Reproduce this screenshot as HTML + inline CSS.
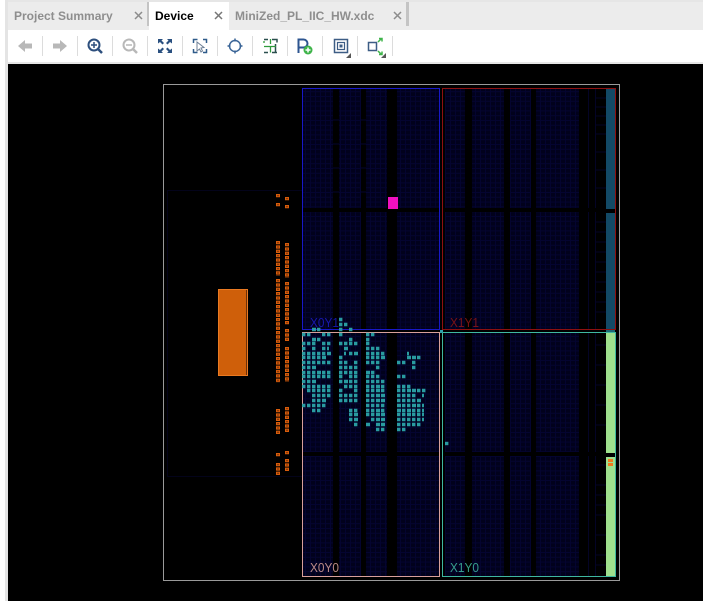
<!DOCTYPE html>
<html><head><meta charset="utf-8"><style>
html,body{margin:0;padding:0;background:#fff;width:703px;height:601px;overflow:hidden}
body{position:relative;font-family:"Liberation Sans",sans-serif}
.a{position:absolute}
.t{position:absolute;top:9px;font-size:12px;font-weight:bold;line-height:14px;white-space:nowrap}
</style></head><body>
<div class="a" style="left:0;top:0;width:5px;height:601px;background:#fff"></div>
<div class="a" style="left:5px;top:0;width:3px;height:601px;background:#e4e4e4"></div>
<div class="a" style="left:8px;top:0;width:695px;height:30px;background:#ececec"></div>
<div class="a" style="left:8px;top:0;width:695px;height:2px;background:#e6e6e6"></div>
<div class="a" style="left:147px;top:2px;width:2px;height:24px;background:#c4c4c4"></div>
<div class="a" style="left:149px;top:2px;width:80px;height:28px;background:#fff"></div>
<div class="a" style="left:406px;top:2px;width:3px;height:24px;background:#c4c4c4"></div>
<div class="t" style="left:14px;color:#8e8e8e">Project Summary</div>
<div class="t" style="left:155px;color:#000">Device</div>
<div class="t" style="left:235px;color:#8e8e8e">MiniZed_PL_IIC_HW.xdc</div>
<div class="a" style="left:8px;top:62px;width:695px;height:2px;background:#e6e6e6"></div>
<div class="a" style="left:8px;top:64px;width:695px;height:537px;background:#000"></div>

<svg class="a" style="left:0;top:0" width="703" height="64" viewBox="0 0 703 64" fill="none">
<g stroke="#8c8c8c" stroke-width="1.5"><path d="M135 12l7 7M142 12l-7 7M394 12l7 7M401 12l-7 7" /><path d="M215 12l7 7M222 12l-7 7" stroke="#777"/></g>
<path d="M42.5 36v20M77.5 36v20M112.5 36v20M147.5 36v20M182.5 36v20M217.5 36v20M252.5 36v20M287.5 36v20M322.5 36v20M357.5 36v20M392.5 36v20" stroke="#dcdcdc"/>
<path d="M18 46l7-6v3.500h7v5h-7v3.500z" fill="#b8b8b8"/>
<path d="M67 46l-7-6v3.500h-7v5h7v3.500z" fill="#b8b8b8"/>
<circle cx="94" cy="45" r="5.500" stroke="#2d4f7d" stroke-width="2"/><path d="M98 49l4 4" stroke="#2d4f7d" stroke-width="2.500"/><path d="M91 45h6M94 42v6" stroke="#2d4f7d" stroke-width="1.500"/>
<circle cx="129" cy="45" r="5.500" stroke="#b8b8b8" stroke-width="2"/><path d="M133 49l4 4" stroke="#b8b8b8" stroke-width="2.500"/><path d="M126 45h6" stroke="#b8b8b8" stroke-width="1.500"/>
<path d="M158 39h5l-1.500 1.500 2.500 2.500-1.500 1.500-2.500-2.500-2 1.500zM172 39h-5l1.500 1.500-2.500 2.500 1.500 1.500 2.500-2.500 2 1.500zM158 53h5l-1.500-1.500 2.500-2.500-1.500-1.500-2.500 2.500-2-1.500zM172 53h-5l1.500-1.500-2.500-2.500 1.500-1.500 2.500 2.500 2-1.500z" fill="#2a5080"/>
<path d="M193.500 43v-3.500h4M203 39.500h3.500v3.500M193.500 49v3.500h4M206.500 49v3.500h-3.500" stroke="#2f5b8a" stroke-width="1.500"/>
<path d="M197 42l7 5.500-3 .5 1.500 3-1.500 1-1.500-3-2.500 2z" fill="#fff" stroke="#6d7f96"/>
<circle cx="235" cy="46" r="5.500" stroke="#3a6597" stroke-width="1.500"/><path d="M235 38.500v3M235 50.500v3M227.500 46h3M239.500 46h3" stroke="#3a6597" stroke-width="1.500"/>
<path d="M264 39.500h4M264 52.500h4M272 39.500h5v3M272 52.500h5M275.500 44v9" stroke="#2a4f4f" stroke-width="1.500"/>
<path d="M264 46.500h6.500v6M270.500 39v5M264 46.500h12M264 41v2" stroke="#2f9a3c" stroke-width="1.300"/>
<path d="M298.500 53V39.500h5a4 4 0 0 1 0 8h-5" stroke="#2d5590" stroke-width="2"/>
<circle cx="308" cy="50" r="4.500" fill="#3fb44a"/><path d="M305.500 50h5M308 47.500v5" stroke="#fff" stroke-width="1.500"/>
<rect x="334.500" y="39.500" width="13" height="13" stroke="#3d5d85" stroke-width="1.500"/><rect x="337.500" y="42.500" width="7" height="7" stroke="#3d5d85" stroke-width="1.200"/><rect x="339.500" y="44.500" width="3" height="3" fill="#3d5d85"/>
<path d="M351 58h-5l5-5z" fill="#555"/>
<rect x="368.500" y="42.500" width="8" height="8" stroke="#3d5d85" stroke-width="1.500"/>
<path d="M378 42l3-3M379 38.500h3v3M378 51l3 3M379 54.500h3v-3" stroke="#3fb44a" stroke-width="1.500"/>
<path d="M386 58h-5l5-5z" fill="#555"/>
</svg>

<svg class="a" style="left:0;top:64px" width="703" height="537" viewBox="0 64 703 537" fill="none" shape-rendering="crispEdges">
<defs>
<pattern id="g" width="5" height="4.800" patternUnits="userSpaceOnUse"><rect width="5" height="4.800" fill="#01011c"/><path d="M0 .5h5M.5 0v4.800" stroke="#040430"/></pattern>
</defs>
<rect x="163.500" y="84.500" width="456" height="496" stroke="#9a9a9a"/>
<path d="M167.500 190v286M167 190.500h135M167 476.500h135" stroke="#03031a"/>
<!-- X0 columns -->
<g fill="url(#g)">
<rect x="303" y="89" width="30" height="119"/><rect x="339" y="89" width="22" height="119"/><rect x="366" y="89" width="21" height="119"/><rect x="397" y="89" width="42" height="119"/>
<rect x="303" y="212" width="30" height="118"/><rect x="339" y="212" width="22" height="118"/><rect x="366" y="212" width="21" height="118"/><rect x="397" y="212" width="42" height="118"/>
<rect x="303" y="333" width="30" height="119"/><rect x="339" y="333" width="22" height="119"/><rect x="366" y="333" width="21" height="119"/><rect x="397" y="333" width="42" height="119"/>
<rect x="303" y="456" width="30" height="120"/><rect x="339" y="456" width="22" height="120"/><rect x="366" y="456" width="21" height="120"/><rect x="397" y="456" width="42" height="120"/>
<!-- X1 columns -->
<rect x="445" y="89" width="20" height="119"/><rect x="472" y="89" width="32" height="119"/><rect x="510" y="89" width="21" height="119"/><rect x="536" y="89" width="43" height="119"/>
<rect x="445" y="212" width="20" height="118"/><rect x="472" y="212" width="32" height="118"/><rect x="510" y="212" width="21" height="118"/><rect x="536" y="212" width="43" height="118"/>
<rect x="445" y="333" width="20" height="119"/><rect x="472" y="333" width="32" height="119"/><rect x="510" y="333" width="21" height="119"/><rect x="536" y="333" width="43" height="119"/>
<rect x="445" y="456" width="20" height="120"/><rect x="472" y="456" width="32" height="120"/><rect x="510" y="456" width="21" height="120"/><rect x="536" y="456" width="43" height="120"/>
</g>
<path d="M588.500 89v119M595.500 89v119M588.500 212v118M595.500 212v118M588.500 333v119M595.500 333v119M588.500 456v120M595.500 456v120M595 98h11M595 107h11M595 116h11M595 125h11M595 134h11M595 152h11M595 170h11M595 188h11M595 222h11M595 232h11M595 242h11M595 252h11M595 262h11M595 272h11M595 282h11M595 292h11M595 302h11M595 312h11M595 345h11M595 365h11M595 385h11M595 405h11M595 425h11M595 465h11M595 485h11M595 495h11M595 505h11M595 515h11M595 535h11M595 555h11M595 565h11" stroke="#040426"/>
<path d="M333 120h6M333 144h6M333 168h6M333 192h6M361 120h5M361 144h5M361 168h5M361 192h5" stroke="#040430"/>
<rect x="606" y="89" width="9" height="241" fill="#134a66"/>
<rect x="606" y="330" width="9" height="3" fill="#1c6a78"/>
<rect x="606" y="333" width="9" height="243" fill="#9fe08d"/>
<rect x="606" y="209" width="10" height="4" fill="#000"/>
<rect x="606" y="453" width="10" height="4" fill="#000"/>
<rect x="608" y="459" width="5" height="3" fill="#f07a1e"/><rect x="608" y="463" width="5" height="3" fill="#f07a1e"/>
<!-- region borders -->
<rect x="302.500" y="88.500" width="137" height="241" stroke="#1818c8"/>
<rect x="442.500" y="88.500" width="173" height="241" stroke="#8e1010"/>
<rect x="302.500" y="332.500" width="137" height="244" stroke="#d9a09a"/>
<rect x="442.500" y="332.500" width="173" height="244" stroke="#3fb8a0"/>
<rect x="440" y="330" width="3" height="3" fill="#2fa0a8"/>
<!-- IO block -->
<rect x="218.500" y="289.500" width="29" height="86" fill="#cf5f0a" stroke="#ea7a22"/>
<rect x="246" y="290" width="1" height="85" fill="#6a3008"/>
<!-- IO pads -->
<g shape-rendering="auto" stroke-width="4">
<path stroke="#d85c0c" stroke-dasharray="3.300 1.030" d="M278 194v4M278 203v4M278 241v35M278 279v104M278 409v26M278 453v4M278 463v12"/>
<path stroke="#d85c0c" stroke-dasharray="3.300 1.030" d="M287 197v4M287 205v4M287 243v35M287 282v43M287 329v13M287 347v35M287 407v26M287 451v4M287 459v13"/>
<path stroke="#5a2604" stroke-width="1.200" stroke-dasharray="1.300 3.030" stroke-dashoffset="-1" d="M278 194v4M278 203v4M278 241v35M278 279v104M278 409v26M278 453v4M278 463v12"/>
<path stroke="#5a2604" stroke-width="1.200" stroke-dasharray="1.300 3.030" stroke-dashoffset="-1" d="M287 197v4M287 205v4M287 243v35M287 282v43M287 329v13M287 347v35M287 407v26M287 451v4M287 459v13"/>
</g>
<!-- magenta -->
<rect x="388" y="197" width="10" height="12" fill="#f010c0"/>
<!-- placed cells -->
<g stroke="#2ba3a8" stroke-width="3.4" shape-rendering="auto" stroke-opacity=".95">
<path d="M302 334.500h3.400M302 343.500h3.400M302 348.500h3.400M302 353.500h3.400M302 357.500h3.400M302 362.500h3.400M302 367.500h3.400M302 372.500h3.400M302 376.500h3.400M302 381.500h3.400M302 386.500h3.400M302 405.500h3.400"/>
<path d="M307 334.500h3.400M307 343.500h3.400M307 353.500h3.400M307 357.500h3.400M307 362.500h3.400M307 367.500h3.400M307 372.500h3.400M307 376.500h3.400M307 381.500h3.400M307 386.500h3.400M307 390.500h3.400M307 405.500h3.400"/>
<path d="M312 329.500h4M312 339.500h4M312 343.500h3.400M312 348.500h3.400M312 353.500h3.400M312 357.500h3.400M312 362.500h3.400M312 367.500h4M312 372.500h3.400M312 376.500h3.400M312 381.500h4M312 386.500h3.400M312 390.500h3.400M312 395.500h3.400M312 400.500h3.400M312 405.500h3.400M312 410.500h3.400"/>
<path d="M317 329.500h3.400M317 339.500h3.400M317 353.500h3.400M317 357.500h3.400M317 362.500h3.400M317 372.500h4M317 376.500h3.400M317 386.500h3.400M317 390.500h3.400M317 395.500h3.400M317 400.500h3.400M317 405.500h3.400M317 410.500h3.400"/>
<path d="M322 334.500h3.400M322 343.500h3.400M322 348.500h3.400M322 353.500h3.400M322 357.500h4M322 362.500h3.400M322 372.500h3.400M322 376.500h3.400M322 386.500h3.400M322 390.500h3.400M322 395.500h3.400M322 400.500h4M322 405.500h3.400"/>
<path d="M327 334.500h3.400M327 343.500h3.400M327 348.500h2M327 353.500h4M327 362.500h3.400M327 372.500h3.400M327 376.500h3.400M327 386.500h3.400M327 390.500h3.400M327 395.500h3.400"/>
<path d="M339 319.500h3.400M339 324.500h3.400M339 329.500h3.400M339 334.500h3.400M339 343.500h3.400M339 357.500h3.400M339 362.500h3.400M339 367.500h3.400M339 372.500h3.400M339 376.500h3.400M339 381.500h3.400M339 390.500h3.400M339 395.500h3.400M339 400.500h3.400"/>
<path d="M344 324.500h3.400M344 343.500h3.400M344 348.500h4M344 353.500h2M344 362.500h3.400M344 367.500h3.400M344 372.500h3.400M344 381.500h4M344 386.500h3.400M344 395.500h3.400M344 400.500h3.400"/>
<path d="M349 329.500h3.400M349 339.500h3.400M349 343.500h3.400M349 353.500h3.400M349 367.500h3.400M349 372.500h3.400M349 376.500h3.400M349 381.500h3.400M349 386.500h3.400M349 395.500h3.400M349 400.500h3.400M349 410.500h3.400M349 414.500h3.400M349 419.500h3.400"/>
<path d="M354 343.500h3.400M354 353.500h4M354 362.500h3.400M354 367.500h3.400M354 372.500h3.400M354 376.500h3.400M354 381.500h3.400M354 386.500h3.400M354 390.500h3.400M354 395.500h3.400M354 400.500h3.400M354 410.500h3.400M354 414.500h4M354 419.500h4M354 424.500h3.400"/>
<path d="M366 334.500h3.400M366 339.500h3.400M366 343.500h3.400M366 348.500h3.400M366 353.500h3.400M366 357.500h3.400M366 362.500h3.400M366 372.500h4M366 376.500h3.400M366 381.500h3.400M366 386.500h3.400M366 390.500h3.400M366 395.500h3.400M366 400.500h3.400M366 405.500h3.400M366 410.500h3.400M366 414.500h3.400M366 424.500h4"/>
<path d="M371 334.500h3.400M371 348.500h3.400M371 353.500h3.400M371 357.500h3.400M371 362.500h3.400M371 372.500h3.400M371 376.500h3.400M371 381.500h3.400M371 386.500h3.400M371 390.500h3.400M371 395.500h3.400M371 400.500h3.400M371 405.500h3.400M371 410.500h3.400M371 414.500h3.400M371 419.500h3.400"/>
<path d="M376 348.500h3.400M376 353.500h3.400M376 357.500h3.400M376 362.500h3.400M376 367.500h3.400M376 376.500h3.400M376 381.500h3.400M376 386.500h4M376 390.500h4M376 395.500h4M376 400.500h4M376 405.500h3.400M376 410.500h4M376 414.500h4M376 419.500h4M376 424.500h4M376 429.500h3.400"/>
<path d="M381 353.500h3.400M381 357.500h4M381 381.500h3.400M381 386.500h3.400M381 390.500h3.400M381 395.500h4M381 400.500h4M381 405.500h3.400M381 410.500h3.400M381 414.500h4M381 419.500h4M381 424.500h4M381 429.500h3.400"/>
<path d="M397 362.500h3.400M397 376.500h3.400M397 386.500h3.400M397 390.500h3.400M397 395.500h3.400M397 400.500h3.400M397 405.500h4M397 410.500h4M397 414.500h3.400M397 419.500h3.400M397 424.500h3.400M397 429.500h3.400"/>
<path d="M402 362.500h3.400M402 376.500h3.400M402 386.500h3.400M402 390.500h3.400M402 395.500h3.400M402 400.500h3.400M402 405.500h3.400M402 410.500h3.400M402 414.500h3.400M402 419.500h3.400M402 424.500h3.400M402 429.500h3.400"/>
<path d="M407 353.500h2M407 357.500h4M407 386.500h3.400M407 390.500h4M407 395.500h3.400M407 400.500h3.400M407 405.500h3.400M407 410.500h4M407 414.500h4M407 419.500h3.400M407 424.500h3.400"/>
<path d="M412 357.500h4M412 362.500h3.400M412 367.500h3.400M412 390.500h4M412 395.500h3.400M412 400.500h3.400M412 405.500h4M412 410.500h3.400M412 414.500h3.400M412 419.500h3.400M412 424.500h3.400"/>
<path d="M417 357.500h3.400M417 390.500h3.400M417 400.500h4M417 405.500h3.400M417 410.500h3.400M417 414.500h3.400M417 419.500h3.400M417 424.500h3.400"/>
<path d="M422 390.500h3.400M422 395.500h2M422 405.500h2M422 410.500h2M422 414.500h2M422 419.500h2"/>
<path d="M445 443.500h3.400"/>
</g>
<g font-family="'Liberation Sans',sans-serif" font-size="13" shape-rendering="auto" opacity=".85">
<text x="310" y="327" fill="#1c1cc4" textLength="29" lengthAdjust="spacingAndGlyphs">X0Y1</text>
<text x="450" y="327" fill="#8e1616" textLength="29" lengthAdjust="spacingAndGlyphs">X1Y1</text>
<text x="310" y="572" fill="#d9a09a" textLength="29" lengthAdjust="spacingAndGlyphs">X0Y0</text>
<text x="450" y="572" fill="#3fb8a0" textLength="29" lengthAdjust="spacingAndGlyphs">X1Y0</text>
</g>
</svg>
</body></html>
